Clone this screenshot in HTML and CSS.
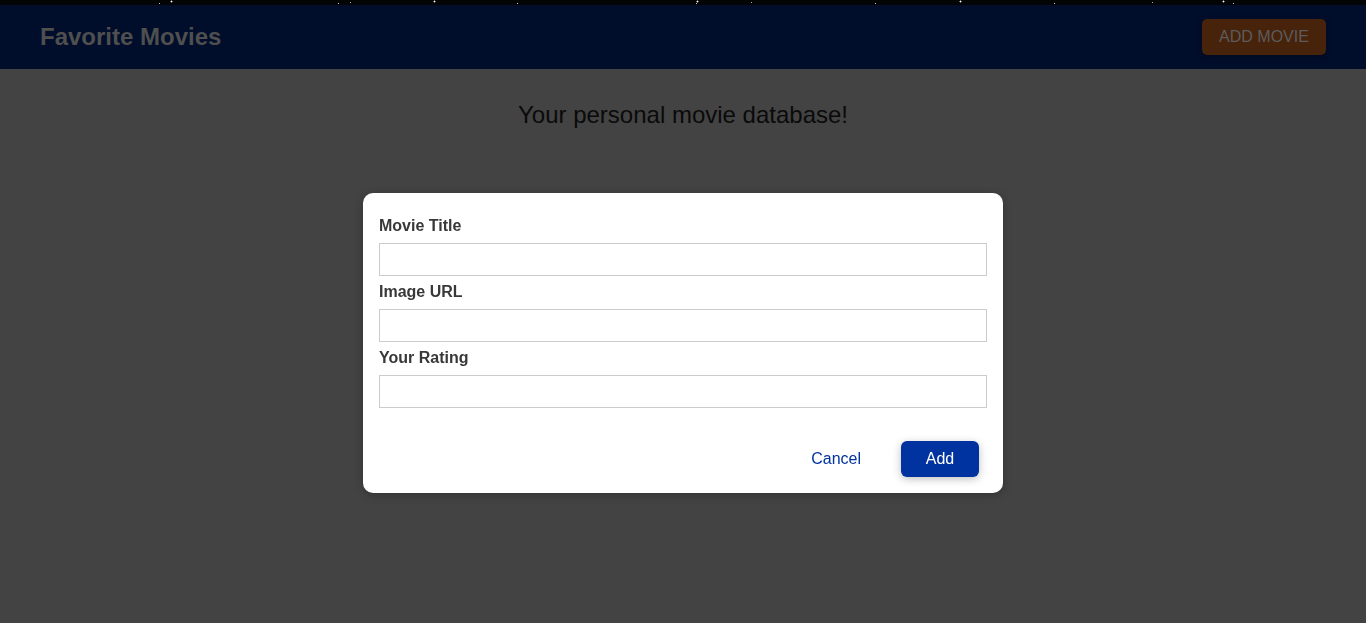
FILE: index.html
```html
<!DOCTYPE html>
<html lang="en">
<head>
<meta charset="utf-8">
<title>Favorite Movies</title>
<link rel="stylesheet" href="styles.css">
</head>
<body>
<div class="stars"></div>
<header class="header">
  <h1 class="brand">Favorite Movies</h1>
  <button class="add-movie">ADD MOVIE</button>
</header>
<main class="main">
  <h2 class="tagline">Your personal movie database!</h2>
</main>
<div class="backdrop">
  <div class="modal">
    <form class="form">
      <div class="field">
        <label class="label" for="title">Movie Title</label>
        <input class="input" id="title" type="text">
      </div>
      <div class="field">
        <label class="label" for="image">Image URL</label>
        <input class="input" id="image" type="text">
      </div>
      <div class="field">
        <label class="label" for="rating">Your Rating</label>
        <input class="input" id="rating" type="text">
      </div>
      <div class="actions">
        <button type="button" class="btn btn-cancel">Cancel</button>
        <button type="button" class="btn btn-add">Add</button>
      </div>
    </form>
  </div>
</div>
</body>
</html>
```
FILE: styles.css
```css
* { box-sizing: border-box; }
html, body { margin: 0; padding: 0; }
body {
  background: #434343;
  font-family: "Liberation Sans", Arial, sans-serif;
  height: 623px;
  overflow: hidden;
}
.stars {
  height: 5px;
  background-color: #030406;
  background-image:
    radial-gradient(circle, #fff 0.7px, transparent 1.2px),
    radial-gradient(circle, #aaa 0.6px, transparent 1px),
    radial-gradient(circle, #ccc 0.6px, transparent 1px);
  background-size: 263px 5px, 401px 5px, 179px 5px;
  background-position: 40px -1px, 150px 0, 70px 1px;
}
.header {
  height: 64px;
  background: #000d2b;
  display: flex;
  align-items: center;
  justify-content: space-between;
  padding: 0 40px;
}
.brand {
  margin: 0;
  font-size: 24px;
  font-weight: bold;
  color: #4f4f4f;
}
.add-movie {
  width: 124px;
  height: 36px;
  border: none;
  border-radius: 5px;
  background: #47230b;
  color: #5c5c5c;
  font-family: "Liberation Sans", Arial, sans-serif;
  font-size: 16px;
  padding: 0;
  box-shadow: 0 2px 6px rgba(0,0,0,0.3);
}
.main { text-align: center; }
.tagline {
  margin: 32px 0 0;
  font-size: 24px;
  font-weight: normal;
  color: #0a0a0a;
}
.backdrop {
  position: fixed;
  inset: 0;
  display: flex;
  justify-content: center;
  padding-top: 193px;
}
.modal {
  width: 640px;
  height: 300px;
  background: #fff;
  border-radius: 10px;
  padding: 23px 16px 16px;
  box-shadow: 0 2px 8px rgba(0,0,0,0.26);
}
.field { margin-bottom: 6px; }
.field:last-of-type { margin-bottom: 0; }
.label {
  display: block;
  font-weight: bold;
  font-size: 16px;
  line-height: 19px;
  color: #383838;
  margin-bottom: 8px;
}
.input {
  display: block;
  width: 100%;
  height: 33px;
  border: 1px solid #ccc;
  font: inherit;
}
.actions {
  display: flex;
  justify-content: flex-end;
  gap: 16px;
  margin-top: 33px;
  padding-right: 8px;
}
.btn {
  height: 36px;
  padding: 0 24px;
  border: none;
  border-radius: 6px;
  font-family: "Liberation Sans", Arial, sans-serif;
  font-size: 16px;
}
.btn-cancel {
  background: transparent;
  color: #0033a0;
}
.btn-add {
  width: 78px;
  background: #0033a0;
  color: #fff;
  box-shadow: 0 2px 8px rgba(0,0,0,0.26);
}
```
